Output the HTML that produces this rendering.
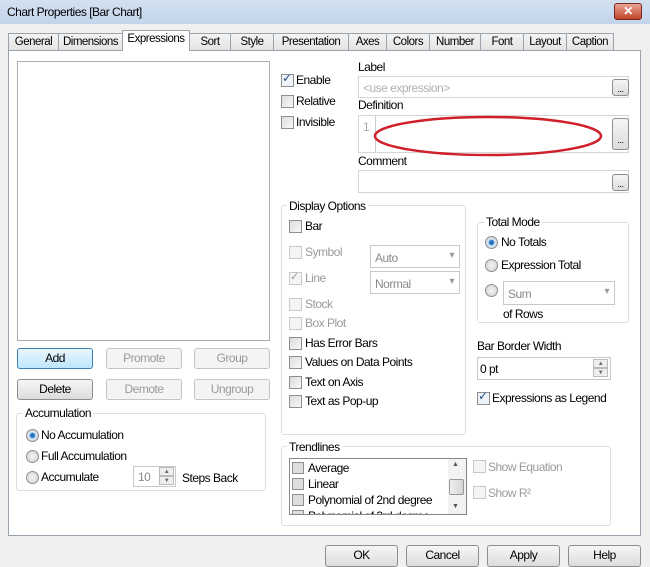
<!DOCTYPE html>
<html><head><style>
*{box-sizing:border-box;margin:0;padding:0}
body{width:650px;height:560px;overflow:hidden;background:#f0f0f0;font-family:"Liberation Sans",sans-serif;font-size:12px;color:#000;position:relative;letter-spacing:-0.5px}
.a{position:absolute}
.title{left:0;top:0;width:650px;height:24px;background:linear-gradient(#d3e1f1,#c2d4ea);}
.title span{position:absolute;left:7px;top:5px;font-size:12px}
.close{left:614px;top:3px;width:28px;height:17px;background:linear-gradient(#e8a393,#c4432a);border:1px solid #7a2a1c;border-radius:3px;color:#fff;font-weight:bold;text-align:center;line-height:14px;font-size:12px}
.tab{top:33px;height:18px;border:1px solid #9aa3ad;border-bottom:none;background:linear-gradient(#f4f4f4,#e2e2e2);text-align:center;line-height:16px;font-size:11.5px}
.tab.sel{top:30px;height:21px;background:#fff;z-index:2}
.panel{left:8px;top:50px;width:633px;height:486px;background:#fff;border:1px solid #9aa3ad}
.box{border:1px solid #abadb3;background:#fff}
.btn{border:1px solid #8d8d8d;border-radius:3px;background:linear-gradient(#f6f6f6,#dcdcdc);text-align:center;line-height:18px}
.btn.dis{border-color:#c5c5c5;color:#9a9a9a;background:#f4f4f4}
.cb{width:13px;height:13px;border:1px solid #8f8f8f;background:linear-gradient(135deg,#dcdcdc,#f8f8f8)}
.cb.dis{border-color:#c8c8c8;background:#f4f4f4}
.rd{width:13px;height:13px;border:1px solid #8f8f8f;border-radius:50%;background:radial-gradient(#f4f4f4,#cfcfcf)}
.rd.on{background:radial-gradient(#1d5ea8 0,#2c7fd0 2px,#dfe9f3 3.5px,#c9d3dd 6px)}
.grp{border:1px solid #d5dfe5;border-radius:3px}
.gl{background:#fff;padding:0 2px}
.dis-t{color:#9a9a9a}
.dots{width:17px;height:17px;border:1px solid #8d8d8d;border-radius:3px;background:linear-gradient(#f6f6f6,#dcdcdc);font-size:9px;text-align:center;line-height:18px}
.combo{border:1px solid #c8c8c8;background:#fff;color:#8a8a8a;padding:5px 0 0 4px}
.combo:after{content:"▾";position:absolute;right:5px;top:4px;color:#999;font-size:10px}
.spin{width:15px;height:9px;border:1px solid #bbb;background:#eee;font-size:6px;text-align:center;line-height:8px;color:#666}
</style></head><body>
<div class="a title"><span>Chart Properties [Bar Chart]</span></div>
<div class="a close">✕</div>

<div class="a tab" style="left:8px;width:51px">General</div>
<div class="a tab" style="left:58px;width:65px">Dimensions</div>
<div class="a tab sel" style="left:122px;width:68px">Expressions</div>
<div class="a tab" style="left:189px;width:42px">Sort</div>
<div class="a tab" style="left:230px;width:44px">Style</div>
<div class="a tab" style="left:273px;width:76px">Presentation</div>
<div class="a tab" style="left:348px;width:39px">Axes</div>
<div class="a tab" style="left:386px;width:44px">Colors</div>
<div class="a tab" style="left:429px;width:52px">Number</div>
<div class="a tab" style="left:480px;width:44px">Font</div>
<div class="a tab" style="left:523px;width:44px">Layout</div>
<div class="a tab" style="left:566px;width:48px">Caption</div>
<div class="a panel"></div>

<div class="a box" style="left:17px;top:61px;width:253px;height:280px"></div>
<div class="a btn" style="left:17px;top:348px;width:76px;height:21px;border-color:#3c7fb1;background:linear-gradient(#eaf6fd,#bee6fd)">Add</div>
<div class="a btn dis" style="left:106px;top:348px;width:76px;height:21px">Promote</div>
<div class="a btn dis" style="left:194px;top:348px;width:76px;height:21px">Group</div>
<div class="a btn" style="left:17px;top:379px;width:76px;height:21px">Delete</div>
<div class="a btn dis" style="left:106px;top:379px;width:76px;height:21px">Demote</div>
<div class="a btn dis" style="left:194px;top:379px;width:76px;height:21px">Ungroup</div>

<div class="a grp" style="left:16px;top:413px;width:250px;height:78px"></div>
<div class="a gl" style="left:23px;top:406px">Accumulation</div>
<div class="a rd on" style="left:26px;top:429px"></div><div class="a" style="left:41px;top:428px">No Accumulation</div>
<div class="a rd" style="left:26px;top:450px"></div><div class="a" style="left:41px;top:449px">Full Accumulation</div>
<div class="a rd" style="left:26px;top:471px"></div><div class="a" style="left:41px;top:470px">Accumulate</div>
<div class="a box" style="left:133px;top:466px;width:43px;height:21px;border-color:#c8c8c8;color:#8a8a8a;padding:3px 4px">10</div>
<div class="a spin" style="left:159px;top:467px">▲</div><div class="a spin" style="left:159px;top:476px">▼</div>
<div class="a" style="left:182px;top:471px">Steps Back</div>

<div class="a cb" style="left:281px;top:74px;background:#eef3f9"></div><div class="a" style="left:282px;top:71px;color:#2b4d8c;font-size:12px">✓</div><div class="a" style="left:296px;top:73px">Enable</div>
<div class="a cb" style="left:281px;top:95px"></div><div class="a" style="left:296px;top:94px">Relative</div>
<div class="a cb" style="left:281px;top:116px"></div><div class="a" style="left:296px;top:115px">Invisible</div>

<div class="a" style="left:358px;top:60px">Label</div>
<div class="a box" style="left:358px;top:76px;width:271px;height:22px;border-color:#d5d5d5;color:#b0b0b0;padding:4px 4px">&lt;use expression&gt;</div>
<div class="a dots" style="left:612px;top:79px">...</div>
<div class="a" style="left:358px;top:98px">Definition</div>
<div class="a box" style="left:358px;top:115px;width:271px;height:38px;border-color:#d5d5d5"></div>
<div class="a" style="left:363px;top:120px;color:#aaa">1</div>
<div class="a" style="left:375px;top:116px;width:1px;height:36px;background:#ccc"></div>
<div class="a dots" style="left:612px;top:118px;height:32px;line-height:42px">...</div>
<svg class="a" style="left:370px;top:114px" width="236" height="46"><ellipse cx="118" cy="22" rx="113" ry="19" fill="none" stroke="#d01f2a" stroke-width="2.5"/></svg>
<div class="a" style="left:358px;top:154px">Comment</div>
<div class="a box" style="left:358px;top:170px;width:271px;height:23px;border-color:#d5d5d5"></div>
<div class="a dots" style="left:612px;top:174px">...</div>

<div class="a grp" style="left:281px;top:205px;width:185px;height:230px"></div>
<div class="a gl" style="left:287px;top:199px">Display Options</div>
<div class="a cb" style="left:289px;top:220px"></div><div class="a" style="left:305px;top:219px">Bar</div>
<div class="a cb dis" style="left:289px;top:246px"></div><div class="a dis-t" style="left:305px;top:245px">Symbol</div>
<div class="a combo" style="left:370px;top:245px;width:90px;height:23px">Auto</div>
<div class="a cb dis" style="left:289px;top:272px"></div><div class="a dis-t" style="left:290px;top:270px;font-size:11px">✓</div><div class="a dis-t" style="left:305px;top:271px">Line</div>
<div class="a combo" style="left:370px;top:271px;width:90px;height:23px">Normal</div>
<div class="a cb dis" style="left:289px;top:298px"></div><div class="a dis-t" style="left:305px;top:297px">Stock</div>
<div class="a cb dis" style="left:289px;top:317px"></div><div class="a dis-t" style="left:305px;top:316px">Box Plot</div>
<div class="a cb" style="left:289px;top:337px"></div><div class="a" style="left:305px;top:336px">Has Error Bars</div>
<div class="a cb" style="left:289px;top:356px"></div><div class="a" style="left:305px;top:355px">Values on Data Points</div>
<div class="a cb" style="left:289px;top:376px"></div><div class="a" style="left:305px;top:375px">Text on Axis</div>
<div class="a cb" style="left:289px;top:395px"></div><div class="a" style="left:305px;top:394px">Text as Pop-up</div>

<div class="a grp" style="left:477px;top:222px;width:152px;height:101px"></div>
<div class="a gl" style="left:484px;top:215px">Total Mode</div>
<div class="a rd on" style="left:485px;top:236px"></div><div class="a" style="left:501px;top:235px">No Totals</div>
<div class="a rd" style="left:485px;top:259px"></div><div class="a" style="left:501px;top:258px">Expression Total</div>
<div class="a rd" style="left:485px;top:284px"></div>
<div class="a combo" style="left:503px;top:281px;width:112px;height:24px">Sum</div>
<div class="a" style="left:503px;top:307px">of Rows</div>
<div class="a" style="left:477px;top:339px">Bar Border Width</div>
<div class="a box" style="left:477px;top:357px;width:134px;height:23px;border-color:#c8c8c8;padding:4px 2px">0 pt</div>
<div class="a spin" style="left:593px;top:359px">▲</div><div class="a spin" style="left:593px;top:368px">▼</div>
<div class="a cb" style="left:477px;top:392px;background:#eef3f9"></div><div class="a" style="left:478px;top:389px;color:#2b4d8c">✓</div><div class="a" style="left:492px;top:391px">Expressions as Legend</div>

<div class="a grp" style="left:281px;top:446px;width:330px;height:80px"></div>
<div class="a gl" style="left:287px;top:440px">Trendlines</div>
<div class="a box" style="left:289px;top:458px;width:178px;height:57px;border-color:#828790;overflow:hidden">
<div style="position:absolute;left:2px;top:3px;width:12px;height:12px;border:1px solid #8f8f8f;background:#ddd"></div><div style="position:absolute;left:18px;top:2px">Average</div>
<div style="position:absolute;left:2px;top:19px;width:12px;height:12px;border:1px solid #8f8f8f;background:#ddd"></div><div style="position:absolute;left:18px;top:18px">Linear</div>
<div style="position:absolute;left:2px;top:35px;width:12px;height:12px;border:1px solid #8f8f8f;background:#ddd"></div><div style="position:absolute;left:18px;top:34px">Polynomial of 2nd degree</div>
<div style="position:absolute;left:2px;top:51px;width:12px;height:12px;border:1px solid #8f8f8f;background:#ddd"></div><div style="position:absolute;left:18px;top:50px">Polynomial of 3rd degree</div>
<div style="position:absolute;left:158px;top:0;width:18px;height:56px;background:#f2f2f2"></div>
<div style="position:absolute;left:162px;top:2px;font-size:7px;color:#555">▲</div>
<div style="position:absolute;left:162px;top:44px;font-size:7px;color:#555">▼</div>
<div style="position:absolute;left:159px;top:20px;width:15px;height:16px;border:1px solid #999;border-radius:2px;background:linear-gradient(90deg,#eee,#d5d5d5)"></div>
</div>
<div class="a cb dis" style="left:473px;top:460px"></div><div class="a dis-t" style="left:488px;top:460px">Show Equation</div>
<div class="a cb dis" style="left:473px;top:486px"></div><div class="a dis-t" style="left:488px;top:486px">Show R²</div>

<div class="a btn" style="left:325px;top:545px;width:73px;height:22px">OK</div>
<div class="a btn" style="left:406px;top:545px;width:73px;height:22px">Cancel</div>
<div class="a btn" style="left:487px;top:545px;width:73px;height:22px">Apply</div>
<div class="a btn" style="left:568px;top:545px;width:73px;height:22px">Help</div>
</body></html>
